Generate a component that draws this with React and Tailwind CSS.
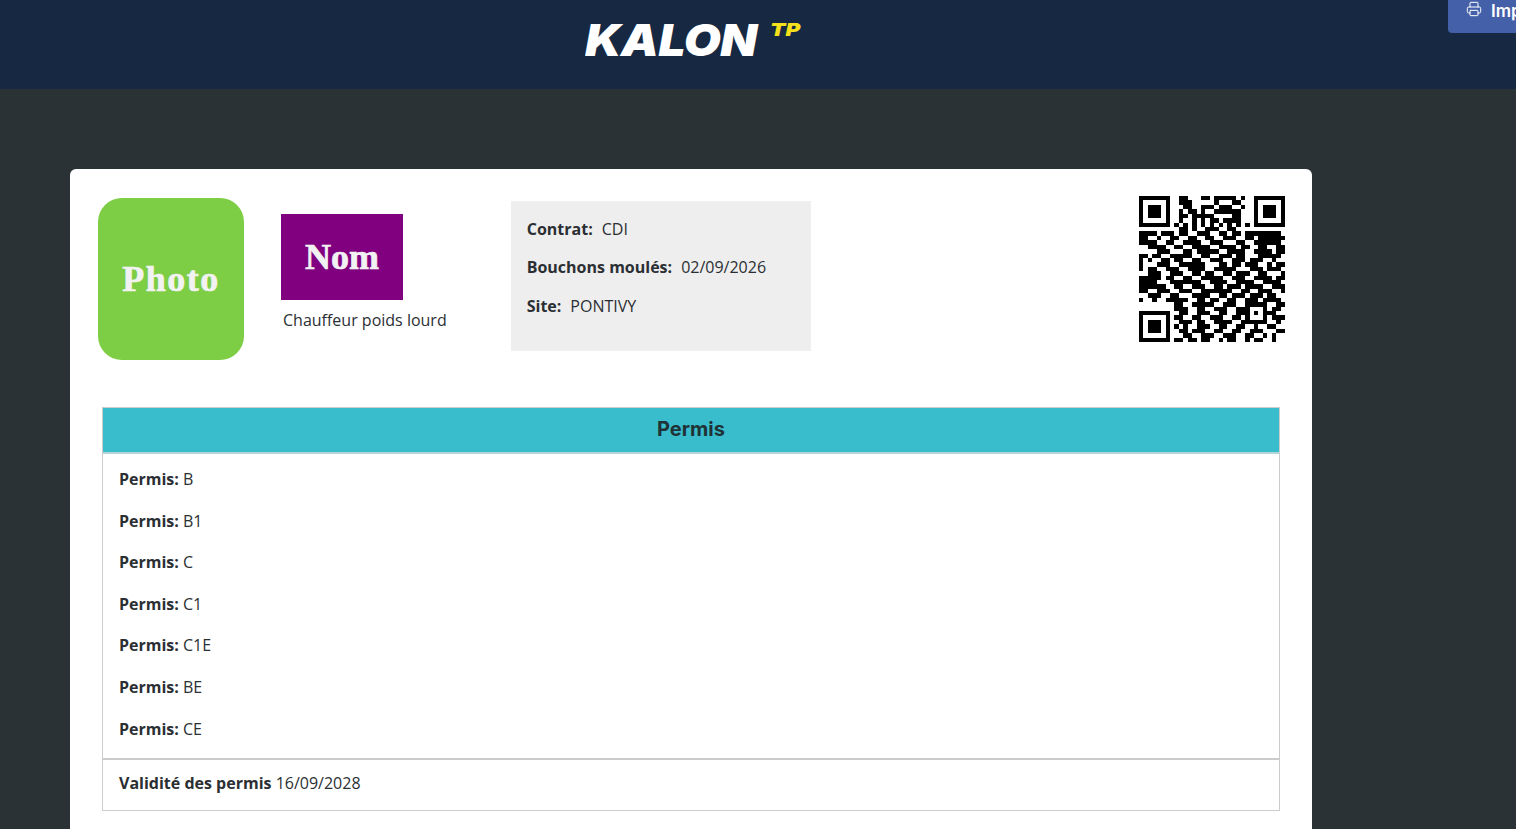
import React from 'react';
import { Printer } from 'lucide-react';

const permis = ['B', 'B1', 'C', 'C1', 'C1E', 'BE', 'CE'];

// QR modules, read off the reference row by row
const qrRows = [
  '111111100110001101111101001111111',
  '100000100111000001000110001000001',
  '101110100011001110111001001011101',
  '101110100101101001111110001011101',
  '101110100110111110000110001011101',
  '100000100100101011011110001000001',
  '111111101010101010101010101111111',
  '000000000110100111001100000000000',
  '111101110110011100110110111111110',
  '110010011001100110011100110111111',
  '111100110011110011100011001111110',
  '001111001100111100111101100110011',
  '000011100011011111001111001111011',
  '110110011111001100111011000111110',
  '101001101100110011100111011100100',
  '100011100111111000110110111001011',
  '101100111001111001111100011101110',
  '001110011100110110011011100110001',
  '111110110011001111100111001111011',
  '111100011111110011110011110011110',
  '111111001100111001101110111100111',
  '110011100111001111111001100111001',
  '001110011000111100110111011101100',
  '100100111110011011001100111011110',
  '000000001100111110011100111110011',
  '000000001110011001110011100010110',
  '111111100110011100110011101011100',
  '100000101100110011100110100010111',
  '101110100111011001111001111110010',
  '101110101010011100110011001001100',
  '101110100110111001100110011100011',
  '100000100011001110011100110010100',
  '111111101101101100101100101100100',
];

const qrPath = qrRows
  .map((row, y) =>
    row
      .split('')
      .map((cell, x) => (cell === '1' ? `M${x} ${y}h1v1h-1z` : ''))
      .join('')
  )
  .join('');

const Info = ({ label, value }) => (
  <p className="flex gap-[9px]">
    <strong className="font-bold">{label}:</strong>
    <span>{value}</span>
  </p>
);

export default function App() {
  return (
    <div className="relative h-[829px] overflow-hidden bg-[#2a3235] font-['Open_Sans',sans-serif] text-base leading-6 text-[#2b2f33]">
      {/* Header */}
      <header className="flex h-[89px] items-start bg-[#172842] pl-[585px]">
        <div className="mt-[15px] flex items-start font-['Inter',sans-serif] font-black italic">
          <span className="inline-block w-[177px] origin-left scale-x-[1.09] text-[44px] leading-[50px] tracking-[-0.5px] text-white">KALON</span>
          <span className="ml-[8px] mt-[3px] inline-block w-[27px] origin-left scale-x-[1.25] text-[18px] leading-6 text-[#f5e11b]">TP</span>
        </div>
      </header>

      <button className="absolute left-[1448px] top-0 flex h-[33px] w-[130px] items-start gap-[9px] rounded-bl-[4px] bg-[#4460a8] pl-[18px] font-['Inter',sans-serif] text-[17px] font-semibold leading-[22px] text-white">
        <Printer className="mt-px" size={16} strokeWidth={1.5} />
        Imprimer
      </button>

      {/* Card */}
      <main className="ml-[70px] mt-[80px] w-[1242px] rounded-md bg-white pb-10 pt-[27px]">
        <section className="flex items-start">
          <div className="ml-[28px] mt-[2px] flex h-[162px] w-[146px] items-center justify-center rounded-[24px] bg-[#7dce44] font-['Liberation_Serif',serif] text-[36px] font-bold tracking-[1.5px] text-[#f2f2f2] [-webkit-text-stroke:0.7px_#f2f2f2]">
            Photo
          </div>

          <div className="ml-[37px] mt-[18px]">
            <div className="flex h-[86px] w-[122px] items-center justify-center bg-[#800080] font-['Liberation_Serif',serif] text-[36px] font-bold text-[#f2f2f2] [-webkit-text-stroke:0.7px_#f2f2f2]">
              Nom
            </div>
            <p className="ml-[2px] mt-2 whitespace-nowrap">Chauffeur poids lourd</p>
          </div>

          <div className="ml-[64px] mt-[5px] flex h-[150px] w-[300px] flex-col gap-[14.4px] bg-[#eeeeee] px-4 pt-4">
            <Info label="Contrat" value="CDI" />
            <Info label="Bouchons moulés" value="02/09/2026" />
            <Info label="Site" value="PONTIVY" />
          </div>

          <svg className="ml-auto mr-[27px] h-[146px] w-[146px]" viewBox="0 0 33 33" shapeRendering="crispEdges">
            <path d={qrPath} fill="#000" />
          </svg>
        </section>

        {/* Permis */}
        <section className="mx-[32px] mt-[47px] border border-[#cccccc]">
          <h2 className="flex h-[46px] items-center justify-center border-b-2 border-[#b4d5da] bg-[#39bccb] pb-[2px] font-['Inter',sans-serif] text-xl font-bold text-[#1f3236]">
            Permis
          </h2>
          <div className="flex flex-col gap-[17.6px] border-b-2 border-[#cccccc] px-4 pb-[17px] pt-[13px]">
            {permis.map((item) => (
              <p key={item}>
                <strong className="font-bold">Permis:</strong> {item}
              </p>
            ))}
          </div>
          <p className="h-[50px] px-4 pt-[11px]">
            <strong className="font-bold">Validité des permis</strong> 16/09/2028
          </p>
        </section>
      </main>
    </div>
  );
}
